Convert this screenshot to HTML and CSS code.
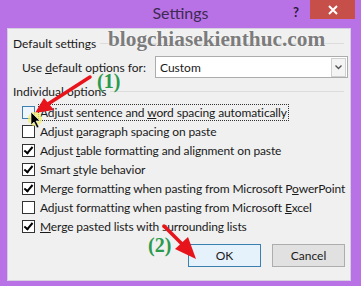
FILE: index.html
```html
<!DOCTYPE html>
<html lang="en">
<head>
    <meta charset="UTF-8">
    <title>Settings</title>
    <link rel="stylesheet" href="styles.css">
</head>
<body>
    <div class="window">
        <div class="titlebar">
            <span class="title">Settings</span>
            <span class="help">?</span>
            <span class="close">
                <svg width="10" height="10" viewBox="0 0 10 10"><path d="M1 1L9 9M9 1L1 9" stroke="#fff" stroke-width="2"/></svg>
            </span>
        </div>

        <div class="panel">
            <div class="group-head"><span>Default settings</span><i></i></div>
            <div class="combo-row">
                <span class="combo-label">Use <u>d</u>efault options for:</span>
                <div class="combo">
                    <span>Custom</span>
                    <span class="combo-btn">
                        <svg width="7" height="5" viewBox="0 0 7 5"><path d="M0.5 0.5L3.5 3.5L6.5 0.5" stroke="#555" stroke-width="1.4" fill="none"/></svg>
                    </span>
                </div>
            </div>

            <div class="group-head"><span>Individual options</span><i></i></div>
            <ul class="options">
                <li><span class="box hover"></span><span class="label focus">Adjust sentence and <u>w</u>ord spacing automatically</span></li>
                <li><span class="box"></span><span class="label">Adjust <u>p</u>aragraph spacing on paste</span></li>
                <li><span class="box checked"></span><span class="label">Adjust <u>t</u>able formatting and alignment on paste</span></li>
                <li><span class="box checked"></span><span class="label">Smart <u>s</u>tyle behavior</span></li>
                <li><span class="box checked"></span><span class="label">Merge formatting when pasting from Microsoft P<u>o</u>werPoint</span></li>
                <li><span class="box"></span><span class="label">Adjust formatting when pasting from Microsoft <u>E</u>xcel</span></li>
                <li><span class="box checked"></span><span class="label"><u>M</u>erge pasted lists with surrounding lists</span></li>
            </ul>

            <div class="buttons">
                <button class="btn default">OK</button>
                <button class="btn">Cancel</button>
            </div>
        </div>

        <!-- screenshot annotations -->
        <div class="watermark">blogchiasekienthuc.com</div>
        <div class="step step1">(1)</div>
        <div class="step step2">(2)</div>
        <svg class="marks" width="361" height="286" viewBox="0 0 361 286">
            <path d="M90 77L48 104" stroke="#e8141c" stroke-width="3.5" stroke-linecap="round"/>
            <polygon points="35,113 44,98 54,110" fill="#e8141c"/>
            <path d="M164 226L183 245" stroke="#e8141c" stroke-width="3.5" stroke-linecap="round"/>
            <polygon points="196,259 175,249 188,237" fill="#e8141c"/>
            <circle cx="35" cy="119" r="7" fill="#f4f06a" opacity="0.8"/>
            <polygon points="31,112 31,125 34,122 37,128 39,127 36,121 40,121" fill="#000" stroke="#fff" stroke-width="0.6"/>
        </svg>
    </div>
</body>
</html>
```

FILE: styles.css
```css
body {
    margin: 0;
    background: #b972e6;
    font-family: Lato, "Noto Sans", sans-serif;
    font-size: 12px;
    color: #1a1a1a;
}
.window {
    position: relative;
    width: 361px;
    height: 286px;
    overflow: hidden;
}
.titlebar {
    height: 28px;
    display: flex;
    align-items: flex-start;
    position: relative;
}
.title {
    position: absolute;
    left: 0;
    right: 0;
    top: 3px;
    text-align: center;
    font-size: 16px;
    color: #3e2a52;
}
.help {
    position: absolute;
    left: 293px;
    top: 4px;
    font-size: 13px;
    font-weight: bold;
    color: #2a1a3a;
}
.close {
    position: absolute;
    left: 310px;
    top: 0;
    width: 45px;
    height: 19px;
    background: #c74f4a;
    display: flex;
    align-items: center;
    justify-content: center;
}
.panel {
    margin: 0 10px 0 7px;
    height: 253px;
    box-sizing: border-box;
    background: #f0f0f0;
    border: 1px solid #d6cfe0;
    padding: 6px 2px 0 5px;
}
.group-head {
    display: flex;
    align-items: center;
    height: 17px;
    gap: 4px;
}
.group-head i {
    flex: 1;
    height: 1px;
    background: #dcdcdc;
    margin-right: 4px;
}
.combo-row {
    display: flex;
    align-items: center;
    margin: 4px 0 5px 9px;
}
.combo-label {
    width: 133px;
    white-space: nowrap;
}
.combo {
    flex: 1;
    height: 22px;
    box-sizing: border-box;
    border: 1px solid #acacac;
    background: #fff;
    display: flex;
    align-items: center;
    justify-content: space-between;
    padding: 0 1px 0 4px;
}
.combo-btn {
    width: 13px;
    height: 17px;
    border: 1px solid #d0d0d0;
    background: #f4f4f4;
    display: flex;
    align-items: center;
    justify-content: center;
}
.options {
    list-style: none;
    margin: 3px 0 0 9px;
    padding: 0;
}
.options li {
    display: flex;
    align-items: center;
    height: 19px;
    white-space: nowrap;
}
.box {
    flex: none;
    width: 13px;
    height: 13px;
    box-sizing: border-box;
    border: 1px solid #333;
    background: #fff;
    margin-right: 3px;
    display: flex;
    align-items: center;
    justify-content: center;
}
.box.hover {
    border-color: #3c7fb1;
    background: #eef6fc;
}
.box.checked::after {
    content: "";
    width: 3px;
    height: 7px;
    border: solid #000;
    border-width: 0 2px 2px 0;
    transform: rotate(40deg);
    margin-top: -2px;
}
.label {
    padding: 0 1px;
    border: 1px dotted transparent;
    letter-spacing: -0.12px;
}
.label.focus {
    border-color: #333;
}
.buttons {
    display: flex;
    justify-content: flex-end;
    gap: 11px;
    margin: 8px 3px 0 0;
}
.btn {
    width: 73px;
    height: 23px;
    border: 1px solid #adadad;
    background: #e1e1e1;
    font-family: inherit;
    font-size: 12px;
    color: #1a1a1a;
}
.btn.default {
    border-color: #3c7fb1;
    background: #e5f1fb;
}
.watermark {
    position: absolute;
    left: 108px;
    top: 27px;
    font-family: "Liberation Serif", serif;
    font-weight: bold;
    font-size: 21.3px;
    color: #7c7c7c;
    text-shadow: 0 0 2px #fff;
}
.step {
    position: absolute;
    font-family: "Liberation Serif", serif;
    font-weight: bold;
    font-size: 20px;
    color: #2b9a4e;
}
.step1 {
    left: 97px;
    top: 70px;
}
.step2 {
    left: 148px;
    top: 234px;
}
.marks {
    position: absolute;
    left: 0;
    top: 0;
}
```
